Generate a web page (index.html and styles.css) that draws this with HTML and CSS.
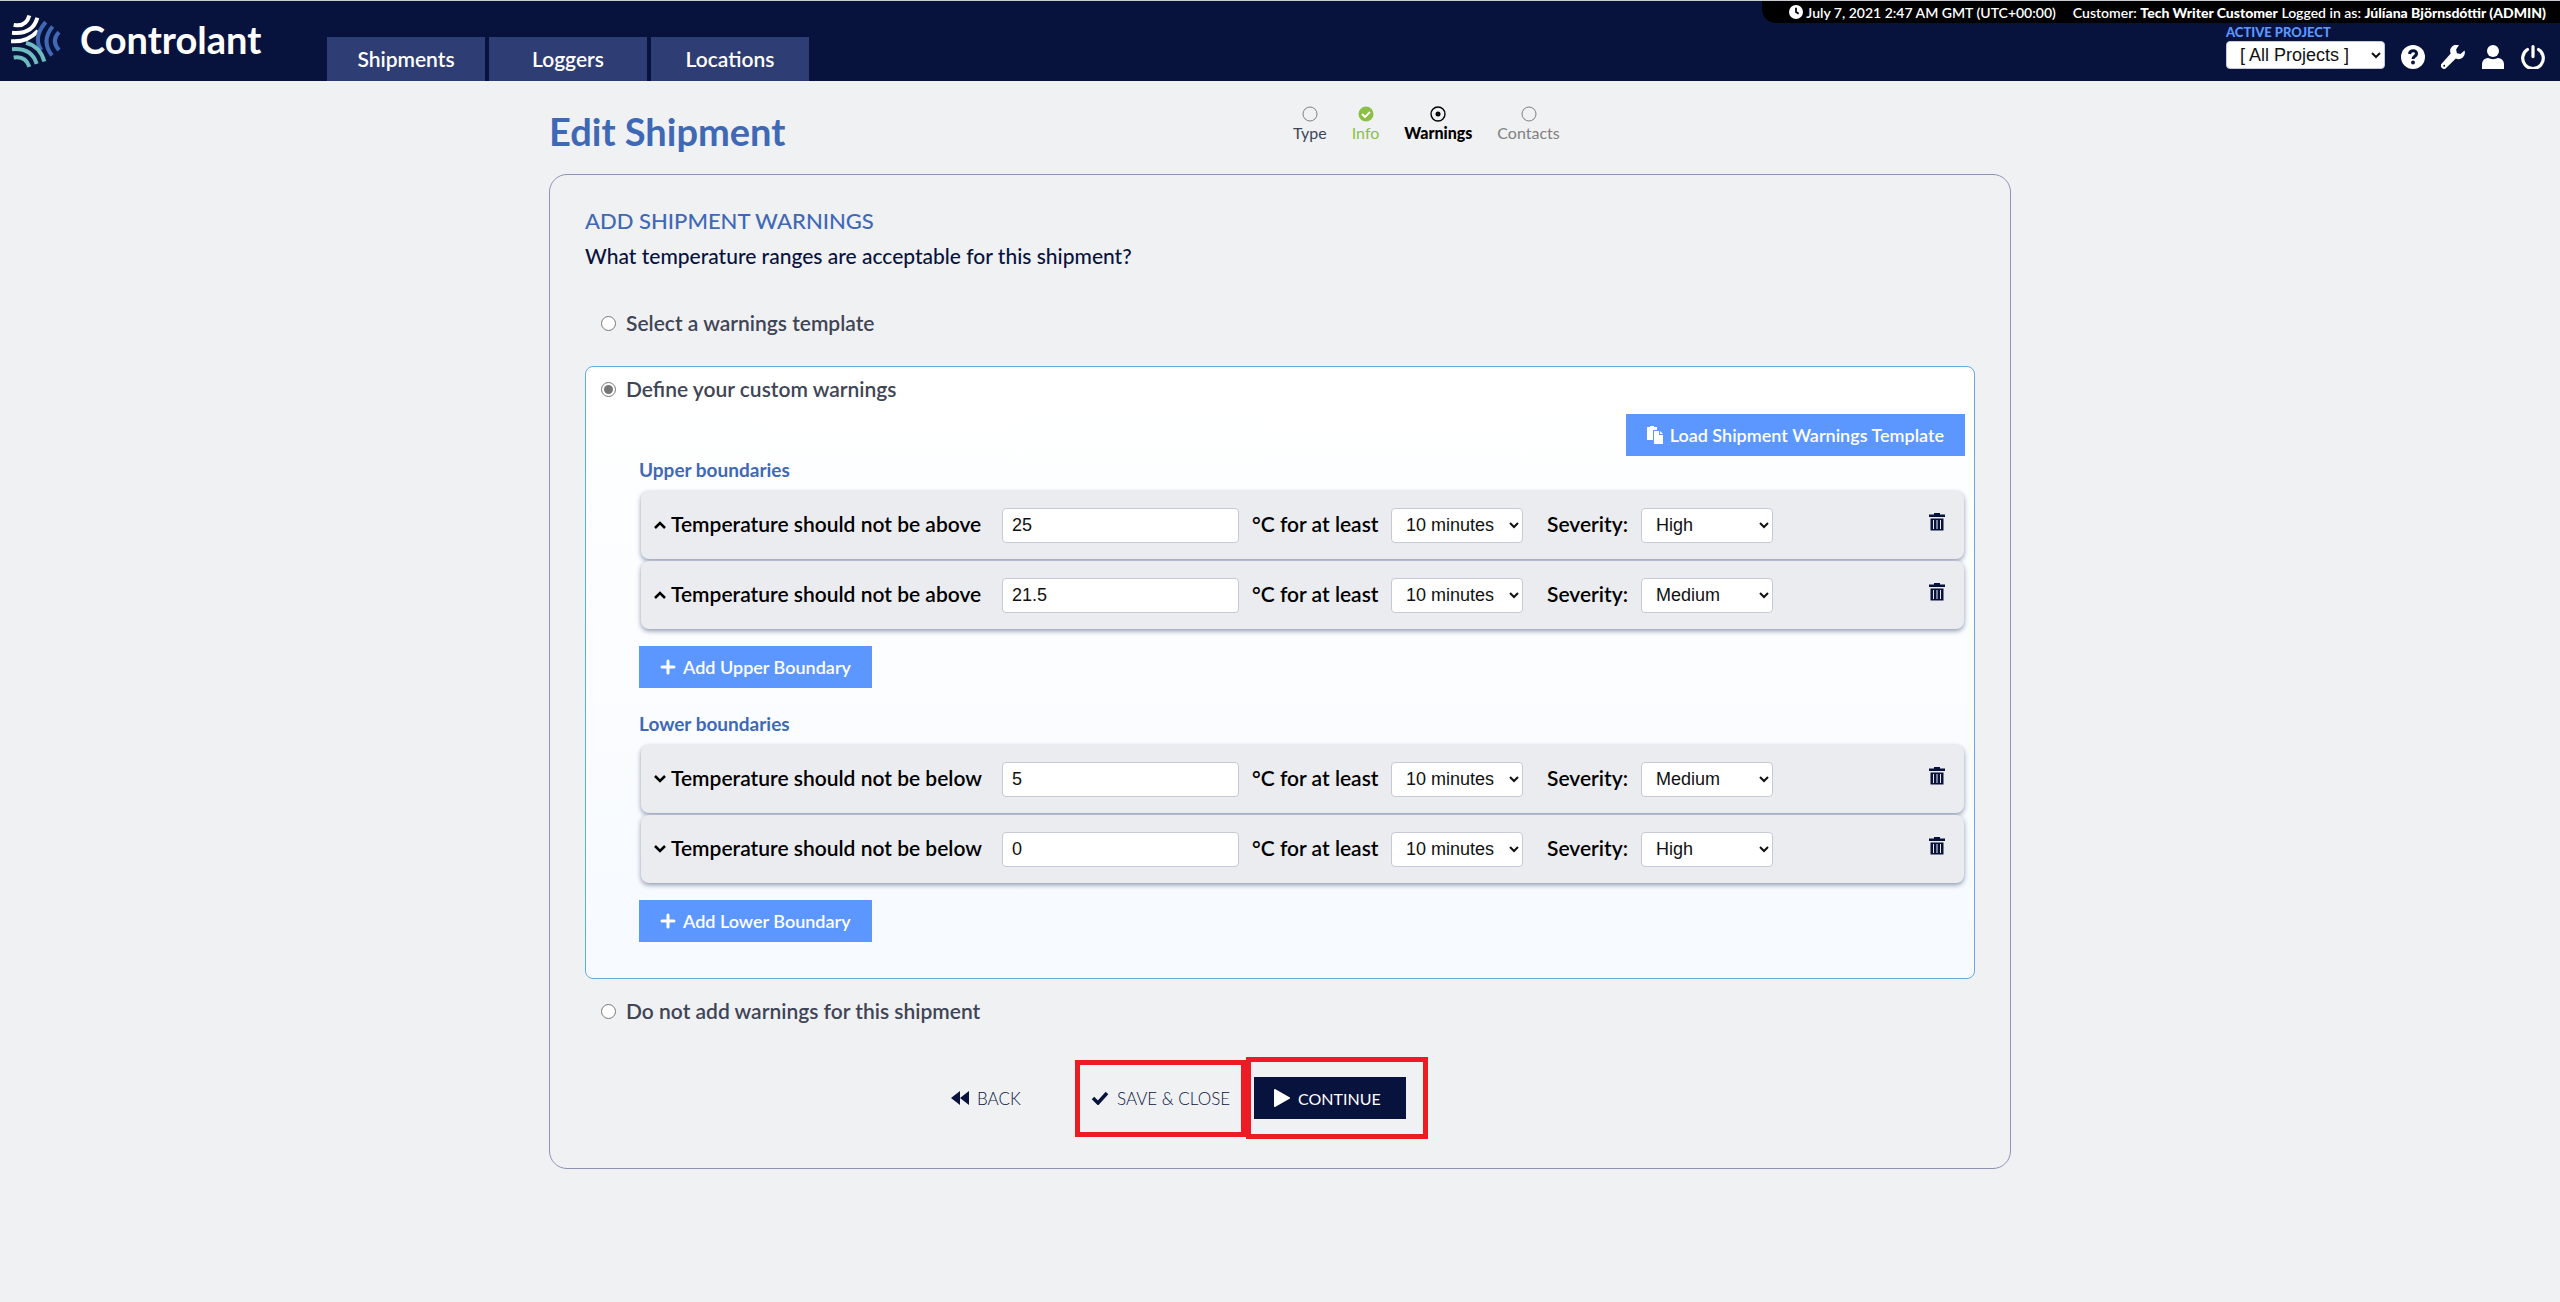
FILE: index.html
```html
<!DOCTYPE html>
<html lang="en">
<head>
<meta charset="utf-8">
<title>Edit Shipment</title>
<link rel="stylesheet" href="styles.css">
</head>
<body>
<header class="topbar">
  <a class="brand" href="#">
    <svg class="brand-mark" viewBox="33 43 150 159" fill="none" stroke-width="12">
      <g stroke="#fff"><path d="M41 74Q78 82 88 46"/><path d="M36 98Q98 104 112 53"/><path d="M33 123Q80 128 114 92"/></g>
      <g stroke="#3f68b5"><path d="M137 66Q98 112 124 150"/><path d="M158 79Q122 122 156 166"/><path d="M177 96Q152 122 177 150"/></g>
      <g stroke="#6fbcc0"><path d="M78 128Q120 138 133 184"/><path d="M36 147Q95 142 110 191"/><path d="M41 172Q77 166 88 200"/></g>
    </svg>
    <span>Controlant</span>
  </a>
  <nav class="tabs">
    <a href="#">Shipments</a>
    <a href="#">Loggers</a>
    <a href="#">Locations</a>
  </nav>
  <div class="account">
    <p class="session">
      <svg class="clock" viewBox="0 0 16 16"><circle cx="8" cy="8" r="8" fill="#fff"/><path d="M8 3v5l3 2" stroke="#000" stroke-width="2" fill="none"/></svg>
      <span>July 7, 2021 2:47 AM GMT (UTC+00:00)</span>
      <span class="who">Customer: <b>Tech Writer Customer</b> Logged in as: <b>Júlíana Björnsdóttir (ADMIN)</b></span>
    </p>
    <div class="tools">
      <div class="project">
        <label for="project">ACTIVE PROJECT</label>
        <select id="project"><option>[ All Projects ]</option></select>
      </div>
      <a href="#" aria-label="Help"><svg viewBox="0 0 24 24"><circle cx="12" cy="12" r="12" fill="#fff"/><path d="M8.500 9c.5-4.500 7.500-4 7 0-.3 2.300-3.500 2.300-3.500 5" stroke="#08133d" stroke-width="3" fill="none"/><circle cx="12" cy="17.500" r="1.900" fill="#08133d"/></svg></a>
      <a href="#" aria-label="Settings"><svg viewBox="0 0 24 24"><path d="M18 0a6.500 6.500 0 0 0-8.300 8.500L.8 18.400a3 3 0 0 0 4.600 4.400l9.400-9.200A6.500 6.500 0 0 0 23.500 5.500l-4 3.500-3.600-.8-.8-3.600z" fill="#fff"/><circle cx="3.200" cy="20.700" r="1" fill="#08133d"/></svg></a>
      <a href="#" aria-label="Profile"><svg viewBox="0 0 24 24"><circle cx="12" cy="6" r="6" fill="#fff"/><path d="M1 24v-5a6 6 0 0 1 6-6c3 1.500 7 1.500 10 0a6 6 0 0 1 6 6v5z" fill="#fff"/></svg></a>
      <a href="#" aria-label="Log out"><svg viewBox="0 0 24 24" fill="none" stroke="#fff" stroke-width="3.200" stroke-linecap="round"><path d="M12 1.600v10M6.500 4.500a10.300 10.300 0 1 0 11 0"/></svg></a>
    </div>
  </div>
</header>

<main class="page">
  <div class="page-head">
    <h1>Edit Shipment</h1>
    <ol class="steps">
      <li><svg viewBox="0 0 16 16"><circle cx="8" cy="8" r="7" fill="none" stroke="#808080"/></svg>Type</li>
      <li class="done"><svg viewBox="0 0 16 16"><circle cx="8" cy="8" r="7.500" fill="#8cbf45"/><path d="M4 8l3 3 5-5" fill="none" stroke="#fff" stroke-width="1.800"/></svg>Info</li>
      <li class="current"><svg viewBox="0 0 16 16"><circle cx="8" cy="8" r="7" fill="none" stroke="#000" stroke-width="1.400"/><circle cx="8" cy="8" r="2.500"/></svg>Warnings</li>
      <li class="next"><svg viewBox="0 0 16 16"><circle cx="8" cy="8" r="7" fill="none" stroke="#808080"/></svg>Contacts</li>
    </ol>
  </div>

  <form class="panel">
    <h2>ADD SHIPMENT WARNINGS</h2>
    <p class="question">What temperature ranges are acceptable for this shipment?</p>

    <label class="choice choice-first"><input type="radio" name="mode">Select a warnings template</label>

    <section class="custom">
      <label class="choice"><input type="radio" name="mode" checked>Define your custom warnings</label>
      <div class="custom-body">
        <button type="button" class="btn load">
          <svg viewBox="0 0 16 18" fill="#fff"><path d="M0 1h3V0h4v1h3v3H6v10H0z"/><path d="M7 5h5v4h4v9H7zM13 5l3 3h-3z"/></svg>
          Load Shipment Warnings Template
        </button>

        <h3>Upper boundaries</h3>
        <div class="rules">
          <div class="rule">
            <svg class="chev" viewBox="0 0 14 10"><path d="M2 8l5-5 5 5"/></svg>
            <label class="limit" for="u1">Temperature should not be above</label>
            <input id="u1" type="text" value="25">
            <label class="time" for="u1t">°C for at least</label>
            <select id="u1t"><option>10 minutes</option></select>
            <label class="sev" for="u1s">Severity:</label>
            <select id="u1s"><option>High</option></select>
            <button type="button" class="trash" aria-label="Delete"><svg viewBox="0 0 16 18"><path d="M0 1.500h5V0h6v1.500h5V4H0z"/><path d="M1 5h14v13H1zM4.500 7v9M8 7v9M11.500 7v9" stroke="#ebecf0"/></svg></button>
          </div>
          <div class="rule">
            <svg class="chev" viewBox="0 0 14 10"><path d="M2 8l5-5 5 5"/></svg>
            <label class="limit" for="u2">Temperature should not be above</label>
            <input id="u2" type="text" value="21.5">
            <label class="time" for="u2t">°C for at least</label>
            <select id="u2t"><option>10 minutes</option></select>
            <label class="sev" for="u2s">Severity:</label>
            <select id="u2s"><option>Medium</option></select>
            <button type="button" class="trash" aria-label="Delete"><svg viewBox="0 0 16 18"><path d="M0 1.500h5V0h6v1.500h5V4H0z"/><path d="M1 5h14v13H1zM4.500 7v9M8 7v9M11.500 7v9" stroke="#ebecf0"/></svg></button>
          </div>
        </div>
        <button type="button" class="btn"><svg viewBox="0 0 16 16" stroke="#fff" stroke-width="3" stroke-linecap="round"><path d="M8 2v12M2 8h12"/></svg>Add Upper Boundary</button>

        <h3 class="lower">Lower boundaries</h3>
        <div class="rules">
          <div class="rule">
            <svg class="chev" viewBox="0 0 14 10"><path d="M2 2l5 5 5-5"/></svg>
            <label class="limit" for="l1">Temperature should not be below</label>
            <input id="l1" type="text" value="5">
            <label class="time" for="l1t">°C for at least</label>
            <select id="l1t"><option>10 minutes</option></select>
            <label class="sev" for="l1s">Severity:</label>
            <select id="l1s"><option>Medium</option></select>
            <button type="button" class="trash" aria-label="Delete"><svg viewBox="0 0 16 18"><path d="M0 1.500h5V0h6v1.500h5V4H0z"/><path d="M1 5h14v13H1zM4.500 7v9M8 7v9M11.500 7v9" stroke="#ebecf0"/></svg></button>
          </div>
          <div class="rule">
            <svg class="chev" viewBox="0 0 14 10"><path d="M2 2l5 5 5-5"/></svg>
            <label class="limit" for="l2">Temperature should not be below</label>
            <input id="l2" type="text" value="0">
            <label class="time" for="l2t">°C for at least</label>
            <select id="l2t"><option>10 minutes</option></select>
            <label class="sev" for="l2s">Severity:</label>
            <select id="l2s"><option>High</option></select>
            <button type="button" class="trash" aria-label="Delete"><svg viewBox="0 0 16 18"><path d="M0 1.500h5V0h6v1.500h5V4H0z"/><path d="M1 5h14v13H1zM4.500 7v9M8 7v9M11.500 7v9" stroke="#ebecf0"/></svg></button>
          </div>
        </div>
        <button type="button" class="btn"><svg viewBox="0 0 16 16" stroke="#fff" stroke-width="3" stroke-linecap="round"><path d="M8 2v12M2 8h12"/></svg>Add Lower Boundary</button>
      </div>
    </section>

    <label class="choice choice-last"><input type="radio" name="mode">Do not add warnings for this shipment</label>

    <div class="actions">
      <button type="button" class="action back"><svg viewBox="0 0 18 14"><path d="M9 0v14L0 7zM18 0v14L9 7z"/></svg>BACK</button>
      <div class="frame frame-save"><button type="button" class="action"><svg viewBox="0 0 18 14"><path d="M2 7l5 5 9-10" fill="none" stroke="#08133d" stroke-width="3.500"/></svg>SAVE &amp; CLOSE</button></div>
      <div class="frame frame-continue"><button type="submit" class="action primary"><svg viewBox="0 0 16 18"><path d="M1 1l14 8-14 8z" fill="#fff" stroke="#fff" stroke-width="2" stroke-linejoin="round"/></svg>CONTINUE</button></div>
    </div>
  </form>
</main>
</body>
</html>
```

FILE: styles.css
```css
* { box-sizing: border-box; }
body { margin: 0; background: #f0f1f3; color: #08133d; font-family: Lato, "Noto Sans", sans-serif; font-size: 21px; }
h1, h2, h3, p, ol { margin: 0; padding: 0; }
a { color: inherit; text-decoration: none; }
button { font-family: inherit; cursor: pointer; }
svg { display: block; flex: none; }

.topbar { display: flex; height: 81px; background: #08133d; border-top: 1px solid #c8ccd0; color: #fff; }
.brand { display: flex; align-items: center; gap: 19px; width: 327px; padding: 0 0 4px 11px; font-size: 38px; line-height: 44px; font-weight: 700; }
.brand-mark { width: 50px; height: 54px; margin-top: 4px; }
.tabs { display: flex; align-items: flex-end; gap: 4px; }
.tabs a { width: 158px; height: 44px; line-height: 44px; text-align: center; background: #2e3d73; font-size: 21px; font-weight: 600; }
.account { margin-left: auto; display: flex; flex-direction: column; align-items: flex-end; }
.session { display: flex; align-items: center; height: 22px; padding: 0 14px 0 27px; background: #000; border-bottom-left-radius: 14px; font-size: 14px; font-weight: 600; white-space: nowrap; }
.session b { font-weight: 900; }
.clock { width: 14px; height: 14px; margin-right: 3px; }
.who { margin-left: 17px; }
.tools { display: flex; align-items: flex-end; gap: 16px; padding-right: 15px; }
.tools a svg { width: 24px; height: 24px; }
.project { display: flex; flex-direction: column; }
.project label { font-size: 13px; line-height: 18px; font-weight: 900; color: #5b97ff; }
.project select { width: 159px; height: 28px; padding: 0 8px 0 9px; }

select, input[type="text"] { border: 1px solid #c6cad6; border-radius: 4px; background: #fff; color: #111; font: 18px "Liberation Sans", sans-serif; }

.page { width: 92%; max-width: 1462px; margin: 0 auto; padding: 24px 0 40px; }
.page-head { display: flex; height: 69px; }
.page-head h1 { width: 744px; font-size: 38px; line-height: 52px; font-weight: 700; color: #3f68b5; }
.steps { display: flex; gap: 25px; list-style: none; font-size: 16px; line-height: 19px; color: #404555; }
.steps li { display: flex; flex-direction: column; align-items: center; gap: 1px; }
.steps svg { width: 16px; height: 16px; margin-top: 1px; }
.steps .done { color: #8cbf45; }
.steps .current { color: #000; font-weight: 900; }
.steps .next { color: #808080; }

.panel { display: flex; flex-direction: column; padding: 31px 35px 29px; border: 1px solid #8d94b3; border-radius: 18px; }
.panel h2 { font-size: 22px; line-height: 30px; font-weight: 500; color: #3f68b5; }
.question { margin-top: 5px; font-size: 21px; line-height: 30px; font-weight: 500; }
.choice { display: flex; align-items: center; gap: 10px; padding-left: 15px; line-height: 30px; font-weight: 600; color: #404555; }
.choice input { width: 15px; height: 15px; margin: 0; accent-color: #767676; }
.choice-first { padding-left: 16px; margin: 37px 0 28px; }
.choice-last { padding-left: 16px; margin-top: 17px; }

.custom { padding: 7px 9px 36px 0; border: 1px solid #60ade6; border-radius: 8px; background: linear-gradient(#fff, #f6faff); }
.custom-body { display: flex; flex-direction: column; align-items: flex-start; padding-left: 53px; }
.btn { display: flex; align-items: center; gap: 7px; height: 42px; padding: 0 21px; border: 0; background: #5b97ff; color: #fff; font-size: 18px; font-weight: 600; }
.btn svg { width: 16px; height: 16px; }
.load { align-self: flex-end; margin-top: 10px; }
.load svg { width: 16px; height: 18px; }
.custom h3 { margin: 0 0 6px; font-size: 19px; line-height: 28px; font-weight: 700; color: #3f68b5; }
.custom h3.lower { margin-top: 22px; }
.rules { display: flex; flex-direction: column; gap: 2px; align-self: stretch; padding: 1px 1px 17px 2px; }
.rule { display: flex; align-items: center; height: 68px; padding: 0 19px 0 12px; border-radius: 8px; background: #ebecf0; box-shadow: 0 2px 5px #8d98b0; color: #000; font-weight: 600; white-space: nowrap; }
.rule label { line-height: 28px; padding-bottom: 2px; }
.rule .limit { min-width: 318px; }
.rule .time { min-width: 127px; }
.chev { width: 14px; height: 10px; margin-right: 4px; fill: none; stroke: #000; stroke-width: 2.5; }
.rule input { width: 237px; height: 35px; margin: 0 13px; padding: 0 9px; }
.rule select { width: 132px; height: 35px; margin-left: 12px; padding: 0 0 0 10px; }
.rule .sev { min-width: 82px; margin-left: 24px; }
.trash { margin: 0 0 6px auto; padding: 0; border: 0; background: none; }
.trash svg { width: 16px; height: 18px; fill: #08133d; }

.actions { display: flex; align-items: center; margin: 31px 0 0 358px; }
.action { display: flex; align-items: center; gap: 8px; height: 42px; border: 0; padding: 0; background: none; color: #08133d; font-size: 17px; font-weight: 300; white-space: nowrap; }
.action svg { width: 18px; height: 14px; fill: #08133d; }
.back { width: 132px; padding-left: 8px; }
.frame { display: flex; align-items: center; border: 5px solid #ed1c24; }
.frame-save { width: 171px; height: 77px; padding-left: 11px; }
.frame-continue { width: 182px; height: 82px; padding-left: 3px; }
.action.primary { width: 152px; padding-left: 20px; background: #08133d; color: #fff; font-size: 16px; font-weight: 400; }
.action.primary svg { width: 16px; height: 18px; }
```
